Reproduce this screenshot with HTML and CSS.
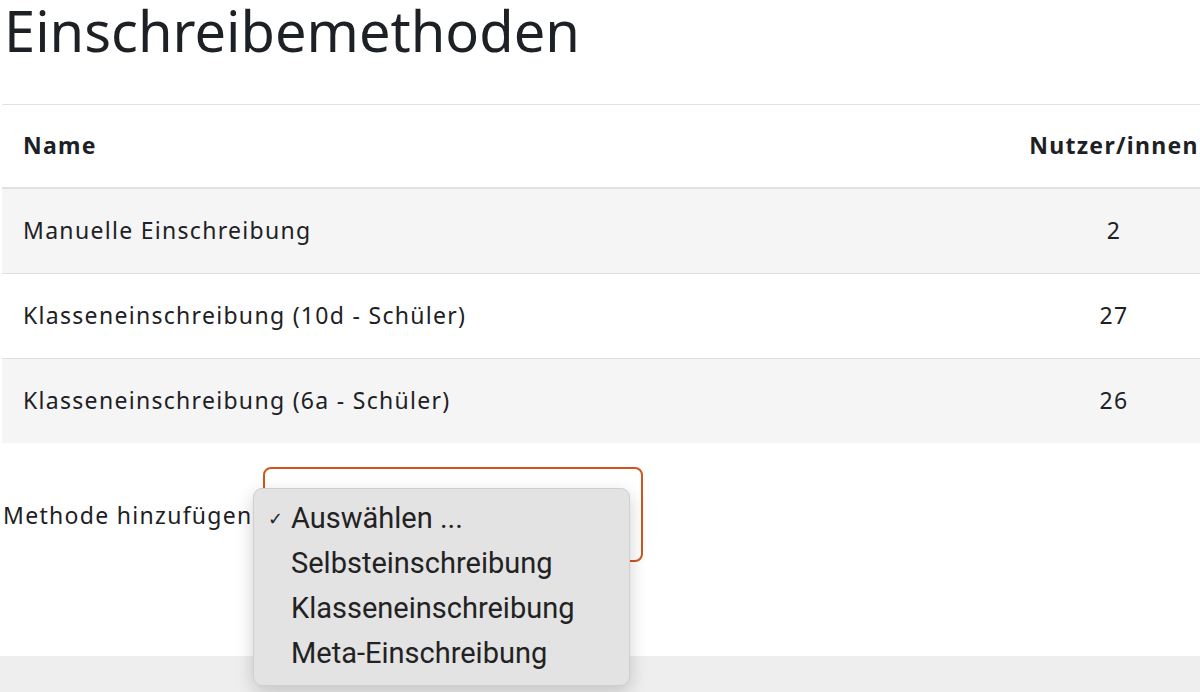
FILE: index.html
```html
<!DOCTYPE html>
<html lang="de">
<head>
    <meta charset="UTF-8">
    <meta name="viewport" content="width=device-width, initial-scale=1.0">
    <title>Einschreibemethoden</title>
    <link rel="stylesheet" href="styles.css">
</head>
<body>
    <div class="page">
        <h1>Einschreibemethoden</h1>

        <div class="table-wrap">
            <table class="methods">
                <thead>
                    <tr>
                        <th class="col-name">Name</th>
                        <th class="col-users">Nutzer/innen</th>
                    </tr>
                </thead>
                <tbody>
                    <tr>
                        <td>Manuelle Einschreibung</td>
                        <td class="col-users">2</td>
                    </tr>
                    <tr>
                        <td>Klasseneinschreibung (10d - Schüler)</td>
                        <td class="col-users">27</td>
                    </tr>
                    <tr>
                        <td>Klasseneinschreibung (6a - Schüler)</td>
                        <td class="col-users">26</td>
                    </tr>
                </tbody>
            </table>
        </div>

        <div class="add-method">
            <label class="add-label">Methode hinzufügen</label>
            <div class="select-box">
                <ul class="dropdown">
                    <li class="selected"><span class="check">✓</span>Auswählen ...</li>
                    <li>Selbsteinschreibung</li>
                    <li>Klasseneinschreibung</li>
                    <li>Meta-Einschreibung</li>
                </ul>
            </div>
        </div>
    </div>
    <div class="footer"></div>
</body>
</html>
```

FILE: styles.css
```css
html, body {
    height: 100%;
}
body {
    margin: 0;
    padding: 0;
    display: flex;
    flex-direction: column;
    font-family: "Noto Sans", Lato, sans-serif;
    color: #1d2125;
    background-color: #fff;
}
.page {
    flex: 1;
    padding-left: 2px;
    padding-top: 2px;
}
h1 {
    font-size: 56px;
    font-weight: 400;
    line-height: 1;
    margin: 0;
    padding: 0 0 46px 2px;
}
.table-wrap {
    overflow: hidden;
}
.methods {
    width: 1220px;
    border-collapse: collapse;
    font-size: 23px;
    letter-spacing: 1.3px;
    border-top: 1px solid #dee2e6;
}
.methods th,
.methods td {
    text-align: left;
    padding: 25px 21px 26px;
    line-height: 33px;
    border-bottom: 1px solid #dee2e6;
}
.methods th {
    font-weight: 700;
    padding: 24px 21px 25px;
    border-bottom: 2px solid #dee2e6;
}
.methods .col-users {
    width: 170px;
    text-align: center;
    padding-left: 8px;
    padding-right: 23px;
}
.methods tbody tr:nth-child(odd) {
    background-color: #f5f5f5;
}
.methods tbody tr:last-child td {
    border-bottom: none;
}
.add-method {
    display: flex;
    align-items: center;
    margin-top: 24px;
    height: 95px;
}
.add-label {
    font-size: 23px;
    letter-spacing: 1.3px;
    padding-left: 1px;
    width: 260px;
}
.select-box {
    position: relative;
    width: 376px;
    height: 91px;
    border: 2px solid #d3541c;
    border-radius: 8px;
}
.dropdown {
    position: absolute;
    left: -12px;
    top: 19px;
    width: 375px;
    margin: 0;
    padding: 7px 0 9px;
    list-style: none;
    background-color: #e3e3e3;
    border: 1px solid #cfcfcf;
    border-radius: 9px;
    box-shadow: 0 6px 18px rgba(0, 0, 0, 0.18);
    font-family: Roboto, "Liberation Sans", sans-serif;
    font-size: 29px;
    color: #222;
    z-index: 2;
}
.dropdown li {
    height: 45px;
    line-height: 45px;
    padding-left: 37px;
    position: relative;
}
.dropdown .check {
    position: absolute;
    left: 14px;
    font-size: 18px;
}
.footer {
    height: 36px;
    flex-shrink: 0;
    background-color: #eeeeee;
}
```
